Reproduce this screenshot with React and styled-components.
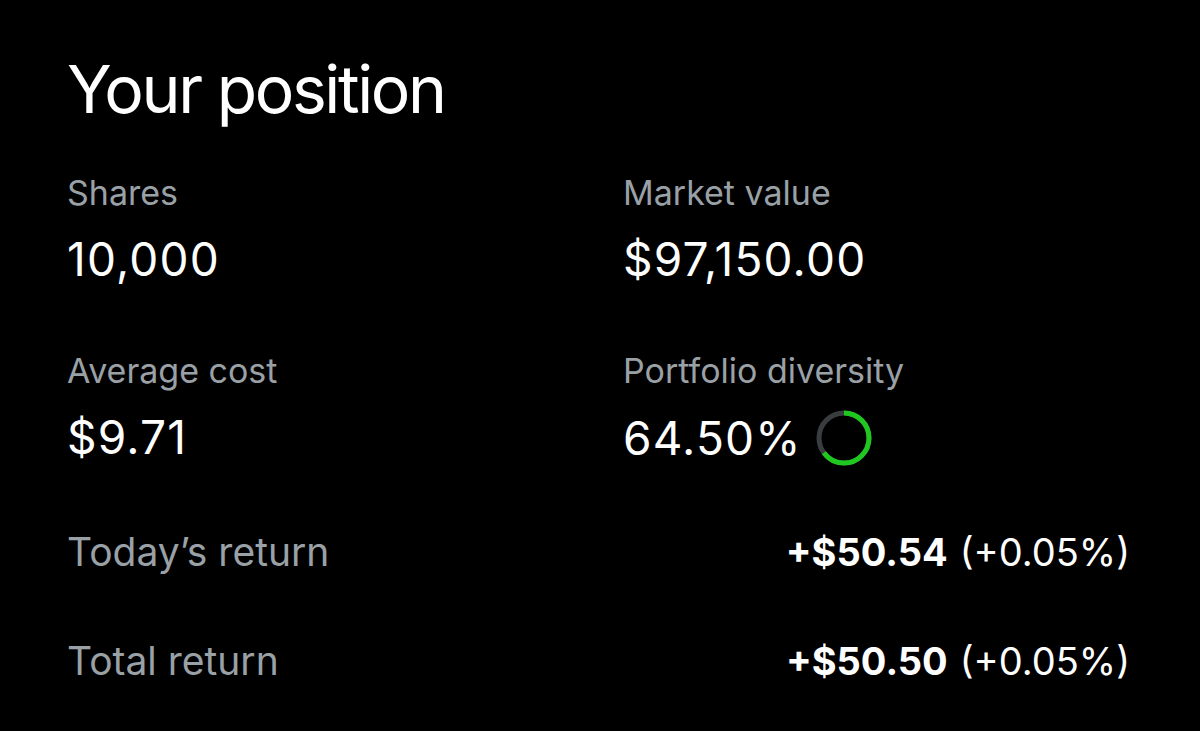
import styled, { createGlobalStyle } from 'styled-components';

const GlobalStyle = createGlobalStyle`
     html, body {
          margin: 0;
          padding: 0;
          background: #000000;
     }
     body {
          font-family: Inter, 'Noto Sans', 'Liberation Sans', sans-serif;
          -webkit-font-smoothing: antialiased;
     }
`;

const colors = {
     background: '#000000',
     text: '#ffffff',
     muted: '#9aa1a6',
     green: '#1ec81e',
     track: '#3a3d40',
};

const Page = styled.div`
     min-height: 731px;
     background: ${colors.background};
     color: ${colors.text};
     padding: 49px 70px 0 67px;
     box-sizing: border-box;
`;

const Title = styled.h1`
     margin: 0;
     font-size: 66px;
     line-height: 80px;
     font-weight: 400;
     letter-spacing: -2.4px;
`;

const StatsGrid = styled.div`
     display: grid;
     grid-template-columns: 556px 1fr;
     row-gap: 65px;
     margin-top: 44px;
`;

const Stat = styled.div`
     display: flex;
     flex-direction: column;
     gap: 19px;
`;

const Label = styled.div`
     font-size: 34px;
     line-height: 40px;
     color: ${colors.muted};
`;

const Value = styled.div`
     display: flex;
     align-items: center;
     gap: 14px;
     font-size: 46px;
     line-height: 54px;
     letter-spacing: 1.2px;
`;

const Returns = styled.div`
     display: flex;
     flex-direction: column;
     gap: 63px;
     margin-top: 63px;
`;

const ReturnRow = styled.div`
     display: flex;
     justify-content: space-between;
     align-items: baseline;
`;

const ReturnLabel = styled.span`
     font-size: 39px;
     line-height: 46px;
     color: ${colors.muted};
`;

const ReturnValue = styled.span`
     font-size: 38px;
     line-height: 46px;
     & > strong {
          font-weight: 700;
          margin-right: 12px;
     }
`;

function DiversityRing({ percent }) {
     const r = 25;
     const c = 2 * Math.PI * r;
     return (
          <svg width="56" height="56" viewBox="0 0 56 56">
               <circle cx="28" cy="28" r={r} fill="none" stroke={colors.track} strokeWidth="5" />
               <circle
                    cx="28"
                    cy="28"
                    r={r}
                    fill="none"
                    stroke={colors.green}
                    strokeWidth="5"
                    strokeDasharray={`${(c * percent) / 100} ${c}`}
                    transform="rotate(-90 28 28)"
               />
          </svg>
     );
}

const stats = [
     { label: 'Shares', value: '10,000' },
     { label: 'Market value', value: '$97,150.00' },
     { label: 'Average cost', value: '$9.71' },
     { label: 'Portfolio diversity', value: '64.50%', ring: 64.5 },
];

const returns = [
     { label: 'Today’s return', amount: '+$50.54', percent: '(+0.05%)' },
     { label: 'Total return', amount: '+$50.50', percent: '(+0.05%)' },
];

function App() {
     return (
          <>
               <GlobalStyle />
               <Page>
                    <Title>Your position</Title>
                    <StatsGrid>
                         {stats.map((stat) => (
                              <Stat key={stat.label}>
                                   <Label>{stat.label}</Label>
                                   <Value>
                                        {stat.value}
                                        {stat.ring && <DiversityRing percent={stat.ring} />}
                                   </Value>
                              </Stat>
                         ))}
                    </StatsGrid>
                    <Returns>
                         {returns.map((row) => (
                              <ReturnRow key={row.label}>
                                   <ReturnLabel>{row.label}</ReturnLabel>
                                   <ReturnValue>
                                        <strong>{row.amount}</strong>
                                        {row.percent}
                                   </ReturnValue>
                              </ReturnRow>
                         ))}
                    </Returns>
               </Page>
          </>
     );
}

export default App;
